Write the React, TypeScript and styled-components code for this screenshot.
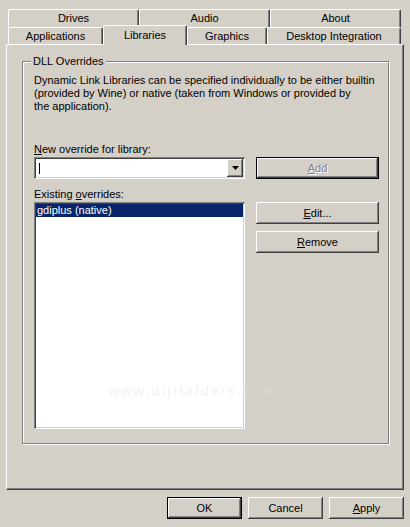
import React from 'react';
import styled, { createGlobalStyle, css } from 'styled-components';

const face = '#d4d0c8';
const shadow = '#808080';
const darkShadow = '#404040';
const highlight = '#ffffff';

const GlobalStyle = createGlobalStyle`
  html, body {
    margin: 0;
    padding: 0;
    background: ${face};
  }
  body {
    font-family: "Liberation Sans", Arial, sans-serif;
    font-size: 11px;
    color: #000;
  }
`;

const raised = css`
  box-shadow: inset -1px -1px ${darkShadow}, inset 1px 1px ${highlight},
    inset -2px -2px ${shadow}, inset 2px 2px ${face};
`;

const sunken = css`
  box-shadow: inset 1px 1px ${shadow}, inset -1px -1px ${highlight},
    inset 2px 2px ${darkShadow}, inset -2px -2px ${face};
`;

const Window = styled.div`
  position: relative;
  width: 410px;
  height: 527px;
  box-sizing: border-box;
  padding: 9px 6px 0 6px;
  display: flex;
  flex-direction: column;
  overflow: hidden;
`;

const TabRow = styled.div<{ $h: number }>`
  display: flex;
  padding-left: 2px;
  height: ${p => p.$h}px;
`;

const Tab = styled.div<{ $w: number; $active?: boolean }>`
  box-sizing: border-box;
  width: ${p => p.$w}px;
  height: 100%;
  border-top: 1px solid ${highlight};
  border-left: 1px solid ${highlight};
  border-right: 1px solid ${darkShadow};
  border-radius: 2px 2px 0 0;
  box-shadow: inset -1px 0 ${shadow};
  display: flex;
  align-items: center;
  justify-content: center;
  line-height: 13px;
  white-space: nowrap;
  ${p =>
    p.$active &&
    css`
      position: relative;
      z-index: 1;
      height: 20px;
      margin-top: -2px;
      padding-bottom: 1px;
      background: ${face};
    `}
`;

const Panel = styled.div`
  box-sizing: border-box;
  width: 398px;
  height: 446px;
  border-top: 1px solid ${highlight};
  border-left: 1px solid ${highlight};
  border-right: 1px solid ${darkShadow};
  border-bottom: 1px solid ${darkShadow};
  box-shadow: inset -1px -1px ${shadow};
  padding: 10px 14px 0 15px;
`;

const GroupBox = styled.fieldset`
  box-sizing: border-box;
  margin: 0;
  height: 389px;
  min-width: 0;
  border: 1px solid ${shadow};
  box-shadow: inset 1px 1px ${highlight}, 1px 1px ${highlight};
  padding: 6px 11px 0 11px;
`;

const Legend = styled.legend`
  margin-left: -3px;
  padding: 0 2px;
  line-height: 13px;
  background: ${face};
`;

const Description = styled.p`
  margin: 0;
  line-height: 13px;
`;

const OverrideGrid = styled.div`
  display: grid;
  grid-template-columns: 211px 123px;
  column-gap: 11px;
  margin-top: 30px;
`;

const Label = styled.div<{ $top?: number }>`
  grid-column: 1 / 3;
  line-height: 13px;
  margin-top: ${p => p.$top ?? 0}px;
  margin-bottom: 1px;
`;

const Combo = styled.div`
  box-sizing: border-box;
  height: 22px;
  padding: 2px;
  display: flex;
  background: #fff;
  ${sunken}
`;

const ComboField = styled.div`
  flex: 1;
  display: flex;
  align-items: center;
`;

const Caret = styled.span`
  display: block;
  width: 1px;
  height: 11px;
  margin-left: 3px;
  background: #000;
`;

const DropButton = styled.div`
  box-sizing: border-box;
  width: 16px;
  height: 18px;
  display: flex;
  align-items: center;
  justify-content: center;
  background: ${face};
  ${raised}
`;

const Button = styled.div<{ $default?: boolean; $disabled?: boolean }>`
  box-sizing: border-box;
  height: 22px;
  display: flex;
  align-items: center;
  justify-content: center;
  background: ${face};
  line-height: 13px;
  ${raised}
  ${p =>
    p.$default &&
    css`
      border: 1px solid #000;
    `}
  ${p =>
    p.$disabled &&
    css`
      color: ${shadow};
      text-shadow: 1px 1px ${highlight};
    `}
`;

const ListBox = styled.div`
  box-sizing: border-box;
  height: 227px;
  padding: 2px;
  background: #fff;
  ${sunken}
`;

const ListItem = styled.div<{ $selected?: boolean }>`
  height: 13px;
  line-height: 13px;
  padding-left: 1px;
  white-space: nowrap;
  ${p =>
    p.$selected &&
    css`
      background: #0a246a;
      color: #fff;
    `}
`;

const ButtonColumn = styled.div`
  display: flex;
  flex-direction: column;
  gap: 7px;
`;

const DialogButtons = styled.div`
  display: flex;
  justify-content: flex-end;
  gap: 6px;
  margin-top: 7px;
`;

const DialogButton = styled(Button)`
  width: 75px;
`;

const Watermark = styled.div`
  position: absolute;
  left: 108px;
  top: 382px;
  font-family: "Liberation Sans", Arial, sans-serif;
  font-weight: bold;
  font-size: 14px;
  letter-spacing: 1.8px;
  line-height: 18px;
  white-space: nowrap;
  color: rgba(228, 226, 222, 0.35);
  pointer-events: none;
`;

const ArrowDown = () => (
  <svg width="7" height="4" viewBox="0 0 7 4">
    <path d="M0 0h7L3.5 4z" fill="#000" />
  </svg>
);

export default function App() {
  return (
    <>
      <GlobalStyle />
      <Window>
        <TabRow $h={18}>
          <Tab $w={131}>Drives</Tab>
          <Tab $w={131}>Audio</Tab>
          <Tab $w={131}>About</Tab>
        </TabRow>
        <TabRow $h={17}>
          <Tab $w={95}>Applications</Tab>
          <Tab $w={84} $active>
            Libraries
          </Tab>
          <Tab $w={80}>Graphics</Tab>
          <Tab $w={134}>Desktop Integration</Tab>
        </TabRow>
        <Panel>
          <GroupBox>
            <Legend>DLL Overrides</Legend>
            <Description>
              Dynamic Link Libraries can be specified individually to be either builtin
              <br />
              (provided by Wine) or native (taken from Windows or provided by
              <br />
              the application).
            </Description>
            <OverrideGrid>
              <Label>
                <u>N</u>ew override for library:
              </Label>
              <Combo>
                <ComboField>
                  <Caret />
                </ComboField>
                <DropButton>
                  <ArrowDown />
                </DropButton>
              </Combo>
              <Button $default $disabled>
                <span>
                  <u>A</u>dd
                </span>
              </Button>
              <Label $top={9}>
                Existing <u>o</u>verrides:
              </Label>
              <ListBox>
                <ListItem $selected>gdiplus (native)</ListItem>
              </ListBox>
              <ButtonColumn>
                <Button>
                  <span>
                    <u>E</u>dit...
                  </span>
                </Button>
                <Button>
                  <span>
                    <u>R</u>emove
                  </span>
                </Button>
              </ButtonColumn>
            </OverrideGrid>
          </GroupBox>
        </Panel>
        <DialogButtons>
          <DialogButton $default>OK</DialogButton>
          <DialogButton>Cancel</DialogButton>
          <DialogButton>
            <span>
              <u>A</u>pply
            </span>
          </DialogButton>
        </DialogButtons>
        <Watermark>www.dijitalders.com</Watermark>
      </Window>
    </>
  );
}
